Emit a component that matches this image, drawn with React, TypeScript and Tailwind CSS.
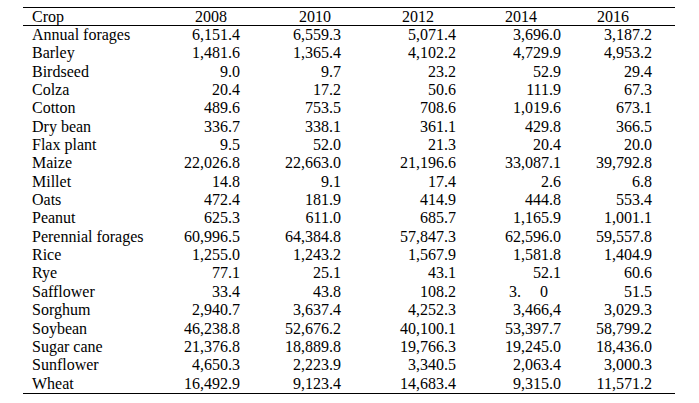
import React from "react";

const rows: [string, string, string, string, string, string][] = [
  ["Annual forages", "6,151.4", "6,559.3", "5,071.4", "3,696.0", "3,187.2"],
  ["Barley", "1,481.6", "1,365.4", "4,102.2", "4,729.9", "4,953.2"],
  ["Birdseed", "9.0", "9.7", "23.2", "52.9", "29.4"],
  ["Colza", "20.4", "17.2", "50.6", "111.9", "67.3"],
  ["Cotton", "489.6", "753.5", "708.6", "1,019.6", "673.1"],
  ["Dry bean", "336.7", "338.1", "361.1", "429.8", "366.5"],
  ["Flax plant", "9.5", "52.0", "21.3", "20.4", "20.0"],
  ["Maize", "22,026.8", "22,663.0", "21,196.6", "33,087.1", "39,792.8"],
  ["Millet", "14.8", "9.1", "17.4", "2.6", "6.8"],
  ["Oats", "472.4", "181.9", "414.9", "444.8", "553.4"],
  ["Peanut", "625.3", "611.0", "685.7", "1,165.9", "1,001.1"],
  ["Perennial forages", "60,996.5", "64,384.8", "57,847.3", "62,596.0", "59,557.8"],
  ["Rice", "1,255.0", "1,243.2", "1,567.9", "1,581.8", "1,404.9"],
  ["Rye", "77.1", "25.1", "43.1", "52.1", "60.6"],
  ["Safflower", "33.4", "43.8", "108.2", "SPECIAL", "51.5"],
  ["Sorghum", "2,940.7", "3,637.4", "4,252.3", "3,466,4", "3,029.3"],
  ["Soybean", "46,238.8", "52,676.2", "40,100.1", "53,397.7", "58,799.2"],
  ["Sugar cane", "21,376.8", "18,889.8", "19,766.3", "19,245.0", "18,436.0"],
  ["Sunflower", "4,650.3", "2,223.9", "3,340.5", "2,063.4", "3,000.3"],
  ["Wheat", "16,492.9", "9,123.4", "14,683.4", "9,315.0", "11,571.2"],
];

const grid = "grid grid-cols-[137px_80px_101px_115px_105px_114px]";

export default function App() {
  return (
    <div className="w-[699px] h-[403px] bg-white text-black font-['Liberation_Serif','Times_New_Roman',serif] text-[16px] overflow-hidden">
      <div className="ml-[23px] mt-[7px] w-[652px] border-t border-b border-black">
        <div className={`${grid} h-[17px] leading-[17px] border-b border-black box-content`}>
          <div className="pl-[9px]">Crop</div>
          <div className="text-right pr-[13px]">2008</div>
          <div className="text-right pr-[10px]">2010</div>
          <div className="text-right pr-[22px]">2012</div>
          <div className="text-right pr-[24px]">2014</div>
          <div className="text-right pr-[46px]">2016</div>
        </div>
        {rows.map((r) => (
          <div key={r[0]} className={`${grid} leading-[18.35px]`}>
            <div className="pl-[9px] whitespace-nowrap">{r[0]}</div>
            <div className="text-right">{r[1]}</div>
            <div className="text-right">{r[2]}</div>
            <div className="text-right">{r[3]}</div>
            <div className="text-right">
              {r[4] === "SPECIAL" ? (
                <span className="mr-[13px]">
                  3.<span className="ml-[19px]">0</span>
                </span>
              ) : (
                r[4]
              )}
            </div>
            <div className="text-right pr-[23px]">{r[5]}</div>
          </div>
        ))}
      </div>
    </div>
  );
}
